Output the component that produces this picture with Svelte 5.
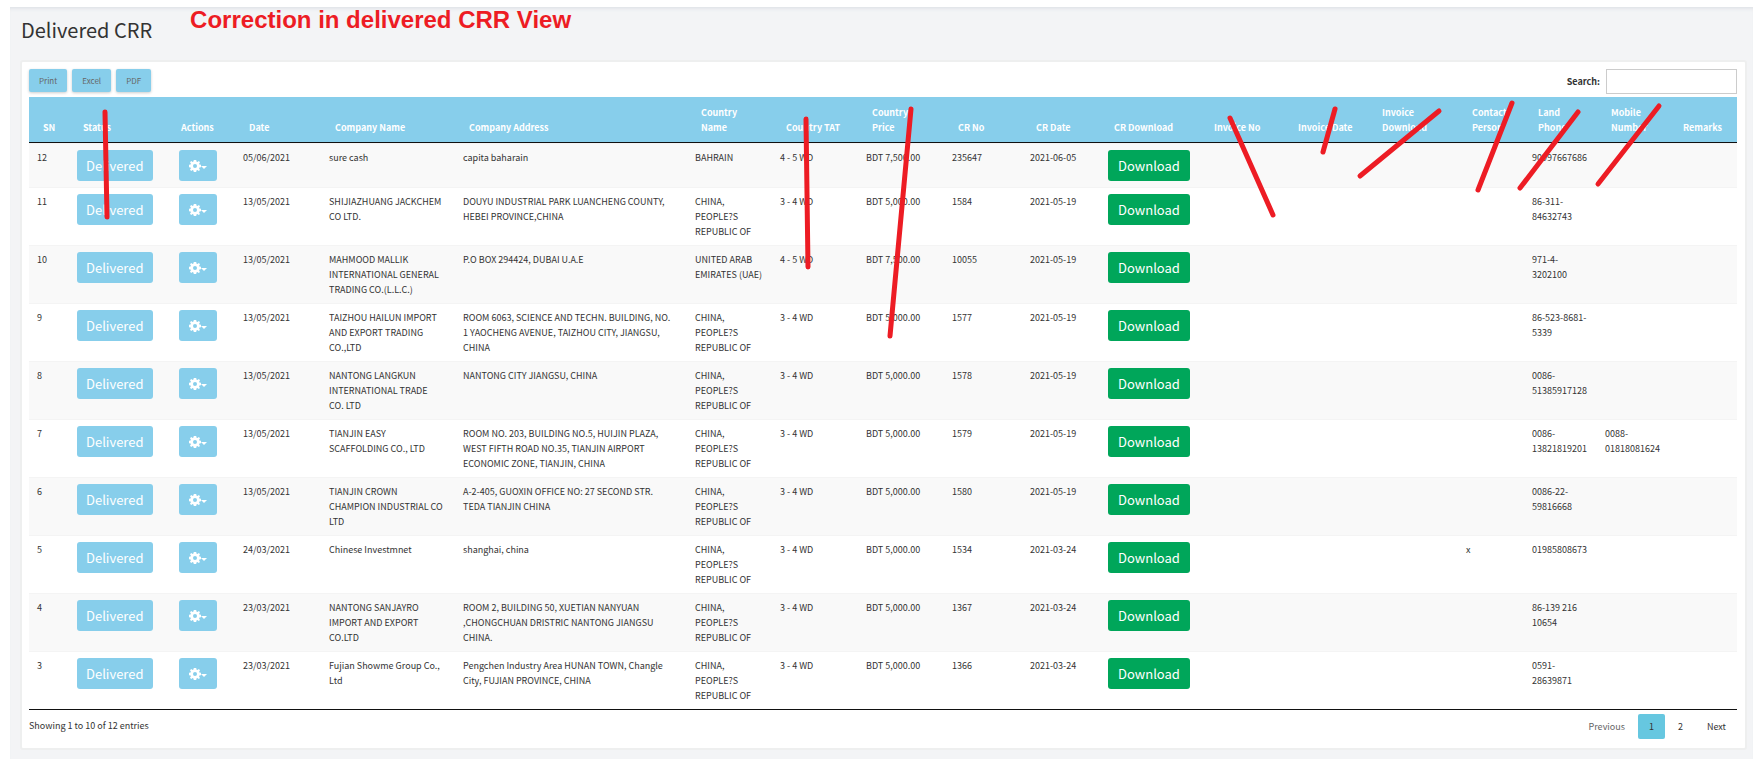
<script>
  const columns = [
    ['SN', 40], ['Status', 98], ['Actions', 68], ['Date', 86], ['Company Name', 134],
    ['Company Address', 232], ['Country Name', 85], ['Country TAT', 86], ['Country Price', 86],
    ['CR No', 78], ['CR Date', 78], ['CR Download', 100], ['Invoice No', 84], ['Invoice Date', 84],
    ['Invoice Download', 90], ['Contact Person', 66], ['Land Phone', 73], ['Mobile Number', 72], ['Remarks', 68]
  ];
  const total = columns.reduce((sum, c) => sum + c[1], 0);
  const twoLine = ['Country Name', 'Country Price', 'Invoice Download', 'Contact Person', 'Land Phone', 'Mobile Number'];
  const china = ['CHINA,', 'PEOPLE?S', 'REPUBLIC OF'];

  const rows = [
    { sn: 12, date: '05/06/2021', name: ['sure cash'], address: ['capita baharain'], country: ['BAHRAIN'], tat: '4 - 5 WD', price: 'BDT 7,500.00', no: '235647', crDate: '2021-06-05', land: ['90997667686'] },
    { sn: 11, date: '13/05/2021', name: ['SHIJIAZHUANG JACKCHEM', 'CO LTD.'], address: ['DOUYU INDUSTRIAL PARK LUANCHENG COUNTY,', 'HEBEI PROVINCE,CHINA'], country: china, tat: '3 - 4 WD', price: 'BDT 5,000.00', no: '1584', crDate: '2021-05-19', land: ['86-311-', '84632743'] },
    { sn: 10, date: '13/05/2021', name: ['MAHMOOD MALLIK', 'INTERNATIONAL GENERAL', 'TRADING CO.(L.L.C.)'], address: ['P.O BOX 294424, DUBAI U.A.E'], country: ['UNITED ARAB', 'EMIRATES (UAE)'], tat: '4 - 5 WD', price: 'BDT 7,500.00', no: '10055', crDate: '2021-05-19', land: ['971-4-', '3202100'] },
    { sn: 9, date: '13/05/2021', name: ['TAIZHOU HAILUN IMPORT', 'AND EXPORT TRADING', 'CO.,LTD'], address: ['ROOM 6063, SCIENCE AND TECHN. BUILDING, NO.', '1 YAOCHENG AVENUE, TAIZHOU CITY, JIANGSU,', 'CHINA'], country: china, tat: '3 - 4 WD', price: 'BDT 5,000.00', no: '1577', crDate: '2021-05-19', land: ['86-523-8681-', '5339'] },
    { sn: 8, date: '13/05/2021', name: ['NANTONG LANGKUN', 'INTERNATIONAL TRADE', 'CO. LTD'], address: ['NANTONG CITY JIANGSU, CHINA'], country: china, tat: '3 - 4 WD', price: 'BDT 5,000.00', no: '1578', crDate: '2021-05-19', land: ['0086-', '51385917128'] },
    { sn: 7, date: '13/05/2021', name: ['TIANJIN EASY', 'SCAFFOLDING CO., LTD'], address: ['ROOM NO. 203, BUILDING NO.5, HUIJIN PLAZA,', 'WEST FIFTH ROAD NO.35, TIANJIN AIRPORT', 'ECONOMIC ZONE, TIANJIN, CHINA'], country: china, tat: '3 - 4 WD', price: 'BDT 5,000.00', no: '1579', crDate: '2021-05-19', land: ['0086-', '13821819201'], mobile: ['0088-', '01818081624'] },
    { sn: 6, date: '13/05/2021', name: ['TIANJIN CROWN', 'CHAMPION INDUSTRIAL CO', 'LTD'], address: ['A-2-405, GUOXIN OFFICE NO: 27 SECOND STR.', 'TEDA TIANJIN CHINA'], country: china, tat: '3 - 4 WD', price: 'BDT 5,000.00', no: '1580', crDate: '2021-05-19', land: ['0086-22-', '59816668'] },
    { sn: 5, date: '24/03/2021', name: ['Chinese Investmnet'], address: ['shanghai, china'], country: china, tat: '3 - 4 WD', price: 'BDT 5,000.00', no: '1534', crDate: '2021-03-24', contact: 'x', land: ['01985808673'] },
    { sn: 4, date: '23/03/2021', name: ['NANTONG SANJAYRO', 'IMPORT AND EXPORT', 'CO.LTD'], address: ['ROOM 2, BUILDING 50, XUETIAN NANYUAN', ',CHONGCHUAN DRISTRIC NANTONG JIANGSU', 'CHINA.'], country: china, tat: '3 - 4 WD', price: 'BDT 5,000.00', no: '1367', crDate: '2021-03-24', land: ['86-139 216', '10654'] },
    { sn: 3, date: '23/03/2021', name: ['Fujian Showme Group Co.,', 'Ltd'], address: ['Pengchen Industry Area HUNAN TOWN, Changle', 'City, FUJIAN PROVINCE, CHINA'], country: china, tat: '3 - 4 WD', price: 'BDT 5,000.00', no: '1366', crDate: '2021-03-24', land: ['0591-', '28639871'] }
  ];

  const strokes = [
    [105, 112, 107, 217], [806, 119, 808, 267], [911, 109, 890, 336], [1230, 118, 1273, 215],
    [1335, 109, 1323, 152], [1439, 111, 1360, 176], [1512, 103, 1478, 190],
    [1578, 112, 1520, 188], [1659, 106, 1598, 184]
  ];
</script>

{#snippet lines(list)}
  {#each list ?? [] as line}<span class="line">{line}</span>{/each}
{/snippet}

<div class="page">
  <main>
    <header>
      <h1>Delivered CRR</h1>
      <p class="note">Correction in delivered CRR View</p>
    </header>

    <section class="card">
      <div class="tools">
        <div class="exports">
          <button type="button">Print</button>
          <button type="button">Excel</button>
          <button type="button">PDF</button>
        </div>
        <div class="search">
          <label for="search">Search:</label>
          <input id="search" type="search" />
        </div>
      </div>

      <table>
        <colgroup>
          {#each columns as [, width]}<col style="width: {(width / total) * 100}%" />{/each}
        </colgroup>
        <thead>
          <tr>
            {#each columns as [title]}
              <th scope="col">{#if twoLine.includes(title)}{@render lines(title.split(' '))}{:else}{title}{/if}</th>
            {/each}
          </tr>
        </thead>
        <tbody>
          {#each rows as r}
            <tr>
              <td>{r.sn}</td>
              <td><button type="button" class="btn status">Delivered</button></td>
              <td class="action">
                <button type="button" class="btn gear" aria-label="Actions">
                  <svg width="18" height="12" viewBox="0 0 18 12" aria-hidden="true">
                    <g fill="#fff">
                      <path fill-rule="evenodd" d="M4.800 0h2.400l.4 1.700.8.300L9.900 1.100 11 2.200l-.9 1.500.3.800L12 4.800v2.400l-1.600.4-.3.800L11 9.900 9.800 11l-1.500-.9-.8.300L7.200 12H4.800l-.4-1.600-.8-.3L2.200 11 1 9.800l.9-1.500-.3-.8L0 7.200V4.800l1.600-.4.3-.8L1 2.200 2.200 1l1.500.9.700-.3zM6 4a2 2 0 1 0 0 4 2 2 0 0 0 0-4z" />
                      <path d="M12 6h6l-3 3z" />
                    </g>
                  </svg>
                </button>
              </td>
              <td>{r.date}</td>
              <td>{@render lines(r.name)}</td>
              <td>{@render lines(r.address)}</td>
              <td>{@render lines(r.country)}</td>
              <td>{r.tat}</td>
              <td>{r.price}</td>
              <td>{r.no}</td>
              <td>{r.crDate}</td>
              <td><button type="button" class="btn download">Download</button></td>
              <td></td>
              <td></td>
              <td></td>
              <td>{r.contact ?? ''}</td>
              <td>{@render lines(r.land)}</td>
              <td>{@render lines(r.mobile)}</td>
              <td></td>
            </tr>
          {/each}
        </tbody>
      </table>

      <footer>
        <p>Showing 1 to 10 of 12 entries</p>
        <nav aria-label="Pages">
          <button type="button" class="muted">Previous</button>
          <button type="button" class="current" aria-current="page">1</button>
          <button type="button">2</button>
          <button type="button">Next</button>
        </nav>
      </footer>
    </section>
  </main>

  <svg class="marks" aria-hidden="true">
    {#each strokes as [x1, y1, x2, y2]}
      <line {x1} {y1} {x2} {y2} />
    {/each}
  </svg>
</div>

<style>
  :global(body) { margin: 0; background: #fff; }
  .page {
    position: relative;
    box-sizing: border-box;
    min-height: 100vh;
    padding: 7px 0 0 10px;
    display: flex;
    overflow: hidden;
    font: 9px/15px "Noto Sans CJK SC", "Noto Sans", sans-serif;
    color: #333;
  }
  button, input { font: inherit; color: inherit; margin: 0; }
  main {
    flex: 1;
    min-width: 0;
    padding: 0 6px 9px 10px;
    background: #f3f4f6;
    box-shadow: inset 0 4px 4px -3px #d9dce2;
  }
  header { display: flex; gap: 38px; height: 53px; padding-left: 1px; }
  h1 { margin: 7px 0 0; font-size: 20px; line-height: 32px; font-weight: 400; }
  .note {
    margin: 0;
    font: bold 24px/26px "Liberation Sans", Arial, sans-serif;
    color: #ed1c24;
  }
  .card {
    background: #fff;
    border: 2px solid #eeefef;
    border-radius: 3px;
    padding: 7px 8px 9px 7px;
  }
  .tools { display: flex; justify-content: space-between; height: 28px; }
  .exports { display: flex; gap: 5px; align-items: flex-start; }
  .exports button {
    height: 23px;
    padding: 0 10px;
    border: 0;
    border-radius: 2px;
    background: #87ceeb;
    color: #666;
    font-size: 8px;
    box-shadow: 0 1px 3px rgba(0, 0, 0, .2);
  }
  .search { display: flex; gap: 6px; align-items: flex-start; font-weight: 700; line-height: 25px; }
  .search input {
    box-sizing: border-box;
    width: 131px;
    height: 25px;
    border: 1px solid #ccc;
    background: #fff;
    padding: 0 6px;
    appearance: none;
  }
  table { width: 100%; table-layout: fixed; border-collapse: separate; border-spacing: 0; border-bottom: 1px solid #111; }
  th {
    padding: 8px 0 7px 14px;
    background: #87ceeb;
    color: #fff;
    text-align: left;
    vertical-align: bottom;
    border-bottom: 1px solid #111;
  }
  td { padding: 6px 0 6px 8px; border-top: 1px solid #f4f4f4; vertical-align: top; white-space: nowrap; }
  tbody tr:nth-child(odd) { background: #f9f9f9; }
  .line { display: block; }
  .btn {
    display: block;
    height: 31px;
    padding: 0 10px;
    border: 0;
    border-radius: 3px;
    background: #87ceeb;
    color: #fff;
    font-size: 13px;
    line-height: 31px;
  }
  .status { padding: 0 9px; }
  .action { padding-left: 12px; }
  .gear svg { display: block; }
  .download { background: #00a65a; }
  footer { display: flex; justify-content: space-between; padding-top: 4px; line-height: 24px; }
  footer p { margin: 0; }
  nav { display: flex; gap: 2px; }
  nav button { height: 25px; padding: 0 11px; border: 0; border-radius: 2px; background: none; }
  .muted { color: #666; }
  .current { background: #66c7e0; }
  .marks { position: absolute; inset: 0; width: 100%; height: 100%; pointer-events: none; }
  .marks line { stroke: #ed1c24; stroke-width: 5; stroke-linecap: round; }
</style>
